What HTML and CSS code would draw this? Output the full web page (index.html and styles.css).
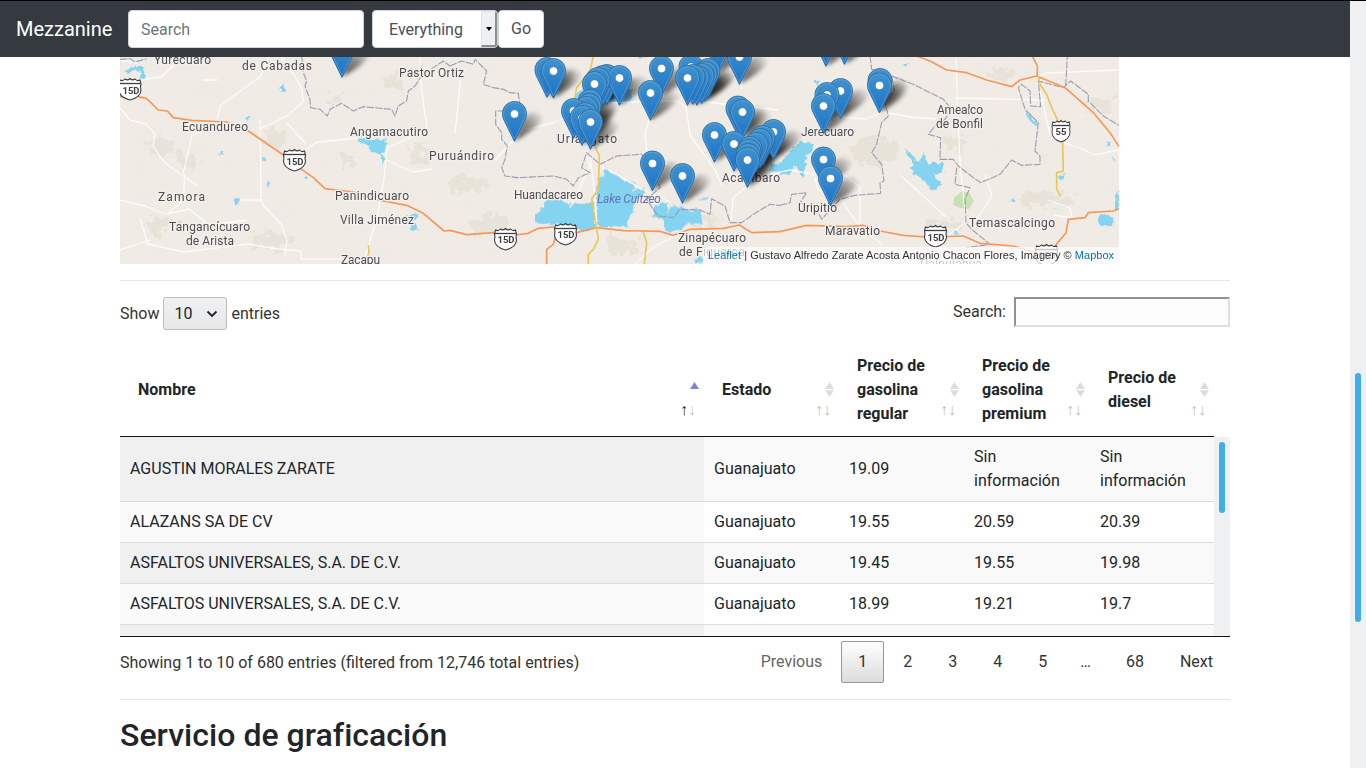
FILE: index.html
```html
<!DOCTYPE html>
<html lang="es">
<head>
<meta charset="utf-8">
<title>Mezzanine</title>
<link rel="stylesheet" href="styles.css">
</head>
<body>
<div class="window">
<div class="page">
<nav class="navbar">
  <a class="brand">Mezzanine</a>
  <input class="nav-input" type="text" placeholder="Search">
  <div class="nav-select"><span>Everything</span><i class="nav-select-btn"></i></div>
  <button class="nav-go">Go</button>
</nav>
<main class="container">
<div class="map">
<svg class="map-svg" viewBox="120 57 999 207" width="999" height="207">
<defs>
  <linearGradient id="pinfill" x1="0" y1="0" x2="0" y2="1"><stop offset="0" stop-color="#3f92cf"/><stop offset="1" stop-color="#1b73c6"/></linearGradient>
  <linearGradient id="pinedge" x1="0" y1="0" x2="0" y2="1"><stop offset="0" stop-color="#2e6c97"/><stop offset="1" stop-color="#2a6ba6"/></linearGradient>
  <linearGradient id="shade" gradientUnits="userSpaceOnUse" x1="2" y1="24" x2="28" y2="2"><stop offset="0" stop-color="#000" stop-opacity=".75"/><stop offset=".5" stop-color="#000" stop-opacity=".5"/><stop offset="1" stop-color="#000" stop-opacity=".05"/></linearGradient>
  <g id="p">
    <path d="M0-12.4C-6.9-12.4-12-7-12-.2C-12 3-10.9 5.6-9.5 8.2L0 27.4L9.5 8.2C10.9 5.6 12 3 12-.2C12-7 6.9-12.4 0-12.4Z" fill="url(#pinfill)" stroke="url(#pinedge)" stroke-width=".9"/>
    <path d="M0-11.3C-6.2-11.3-10.9-6.4-10.9-.2C-10.9 2.8-9.8 5.2-8.5 7.7L0 25L8.5 7.7C9.8 5.2 10.9 2.8 10.9-.2C10.9-6.4 6.2-11.3 0-11.3Z" fill="none" stroke="#8ec1ea" stroke-opacity=".4" stroke-width=".9"/>
    <circle r="4.3" fill="#fff" stroke="#2d70a8" stroke-width=".7"/>
  </g>
  <path id="s" fill="url(#shade)" d="M0 27C4 17 6 5 14 0C22-4 30 0 27 6C22 15 9 22 0 27Z"/>
  <g id="shield"><path d="M-10-9Q-7-7.500-5-10Q-2.500-8 0-10.500Q2.500-8 5-10Q7-7.500 10-9L11-5Q10-2 11 1Q11 8 0 11Q-11 8-11 1Q-10-2-11-5Z" fill="#fff" stroke="#3c3c44" stroke-width="1.1"/><path d="M-10.500-5.500H10.500" stroke="#3c3c44" stroke-width="1.300"/></g>
  <filter id="soft" x="-5%" y="-20%" width="110%" height="140%"><feGaussianBlur stdDeviation="2"/></filter>
  <filter id="terrain" x="0" y="0" width="100%" height="100%"><feTurbulence type="fractalNoise" baseFrequency=".038 .05" numOctaves="4" seed="8"/><feColorMatrix values="0 0 0 0 .85 0 0 0 0 .84 0 0 0 0 .77 7 0 0 0 -4"/></filter>
  <filter id="rough" x="-5%" y="-5%" width="110%" height="110%"><feTurbulence type="fractalNoise" baseFrequency=".12" numOctaves="3" seed="3"/><feDisplacementMap in="SourceGraphic" scale="24" xChannelSelector="R" yChannelSelector="G"/></filter>
  <filter id="shore" x="-5%" y="-5%" width="110%" height="110%"><feTurbulence type="fractalNoise" baseFrequency=".2" numOctaves="2" seed="5"/><feDisplacementMap in="SourceGraphic" scale="6" xChannelSelector="R" yChannelSelector="G"/></filter>
</defs>
<rect x="120" y="57" width="999" height="207" fill="#f0ebe5"/>
<rect x="120" y="57" width="999" height="207" filter="url(#terrain)" opacity=".42"/>
<g fill="#dedacb" opacity=".45" filter="url(#rough)">
  <ellipse cx="162" cy="145" rx="14" ry="9"/><ellipse cx="187" cy="160" rx="11" ry="8"/><ellipse cx="275" cy="138" rx="12" ry="10"/><ellipse cx="159" cy="225" rx="13" ry="9"/><ellipse cx="272" cy="240" rx="22" ry="8"/><ellipse cx="347" cy="160" rx="7" ry="6"/><ellipse cx="420" cy="152" rx="12" ry="9"/><ellipse cx="394" cy="82" rx="10" ry="6"/><ellipse cx="336" cy="98" rx="8" ry="4"/><ellipse cx="468" cy="184" rx="20" ry="8"/><ellipse cx="490" cy="225" rx="20" ry="10"/><ellipse cx="622" cy="244" rx="18" ry="9"/><ellipse cx="875" cy="152" rx="24" ry="14"/><ellipse cx="955" cy="143" rx="12" ry="8"/><ellipse cx="1046" cy="199" rx="28" ry="7"/><ellipse cx="1100" cy="105" rx="14" ry="7"/><ellipse cx="943" cy="225" rx="16" ry="5"/><ellipse cx="700" cy="220" rx="18" ry="6"/><ellipse cx="1000" cy="75" rx="12" ry="5"/>
</g>
<g fill="#bedfab" opacity=".8"><path d="M954 198l8-7 7 2 5 8-5 8-9-1-7-3zM177 223l4-3v5z"/></g>
<g fill="#84d3f1" filter="url(#shore)">
  <g transform="translate(120 56) scale(.33333)"><path d="M712 238L735 240L755 252L797 250V285L785 292L798 308L790 325L782 295L755 290L745 268L715 258ZM15 45L40 32L68 33L76 48L72 68L62 75L64 48L45 42L22 52ZM478 100L488 82L498 98L490 106ZM372 185L384 177L386 195ZM297 296L311 286L308 297ZM430 298L443 308L438 316L428 314ZM550 368L561 355L562 370ZM438 378L450 380L445 395ZM342 432L348 420L360 430L358 442L345 446ZM855 485L880 470L896 480L882 495L890 510L897 526L875 520L865 500Z"/></g>
  <g transform="translate(450 56) scale(.33333)"><path d="M255 480L280 450L290 432L330 432L350 445L430 438L436 512L415 528L390 522L370 510L255 500ZM440 385L448 362L463 358L465 332L478 350L500 355L530 378L557 382L548 405L580 398L590 405L560 430L550 450L550 470L535 490L532 515L500 510L445 512L443 440L438 420ZM610 450L650 440L652 465L670 447L720 462L750 460L762 505L715 500L690 522L660 532L640 515L638 490L620 480L608 490ZM738 435L755 428L780 420L770 430ZM733 605L757 600L760 620L735 624ZM372 130L385 105L550 100L545 135L520 142L470 135L400 142ZM955 345L965 325L990 320L1020 290V358L990 350ZM315 237L328 240L325 245Z"/></g>
  <g transform="translate(780 56) scale(.33333)"><path d="M0 325L20 315L30 290L60 260L102 262L95 285L80 300L75 330L70 370L50 330L30 350L0 355ZM375 270L400 305L420 320L430 290L445 330L460 320L490 325V348L460 355L485 385L465 402L452 400L440 380L425 370L405 360L390 335L402 325L385 300ZM735 168L750 175L772 205L765 208L745 190ZM978 256L992 258L990 272L980 270ZM835 358L858 355L850 365L842 375ZM955 480L975 475L1000 482V510L960 508ZM1017 400V460L1005 465V430ZM520 522L538 530L520 535ZM694 425L704 432L696 440ZM368 28L385 15L382 32ZM98 70L117 75L108 88ZM995 305L1008 308L1000 314Z"/></g>
</g>
<g fill="none" stroke="#fff" stroke-width="1.300" opacity=".8" stroke-linejoin="round">
  <path d="M120 108l10 12 16 4 9 10-2 12 11 16 12 9 22 15M185 174l-2 27-16 13 22-5 20 16 38-5M183 174l9-38 25-16M120 200l25 6 20 8M260 120l1 80 2 5 18 19 6 16-2 16M140 218l8 26 36 8 64-8 30 5 23 2 0 8 60 0M120 250l30-10M217 119l4-14 40-29 8-20M281 57l13 18 8 14 1 13-15 13-17 9-11 5M218 80l-16 0M120 60l17 3M183 57l-22 20-21 3M287 123l18 20"/>
  <path d="M420 57l1 28 6 45-40 18-3 30-7 40-14 46M387 160l25 12 20-3M305 150l12-8 62-6 50-3M458 64l2 20-5 50M240 200l22 0"/>
  <path d="M495 160l28-30 30-7 42-20 82-2 9 6 4 28 25 35 7 16M570 208l20-42-5-12M590 154l5 44 2 40M745 188l-12 10-2 22M650 118l-5 15 2 22 27 12M600 165l40 23 30 14M738 57l4 32M688 100l90 10M743 180l47-10 65 12M635 264l20-18 20-10"/>
  <path d="M815 120l25-3 25 2 18-7 28 5 25 2M956 57l2 60 2 45 6 60-20 15M815 178l3 12 20 5 22 32 23 18M860 227l0-40-25-20M1035 77l12-4 72-3M1040 90l10 45M955 98l90 2M1060 142l20 6 15 7 24-5M1048 200l22 8 2 10-18-3M985 174l7 22-18 28M900 175l30 27 16 15"/>
</g>
<g fill="none" stroke="#9d9dae" stroke-width="3.300" stroke-dasharray="22 4" stroke-linejoin="round">
  <path transform="translate(120 56) scale(.33333)" d="M0 10L30 8L45 18L80 8M545 0L550 50L560 75L555 90L570 130L572 155L600 160L622 180L630 160L665 142L700 165L730 152L815 160L825 180L835 150L860 135L865 105L885 90L905 60L940 35L970 15L990 30"/>
  <path transform="translate(450 56) scale(.33333)" d="M0 30L35 15L70 25L75 10L110 45L100 85L130 95L160 100L180 110L205 112L212 165H137V205L155 230V250L172 270L165 310L155 335L165 360L200 365L310 360L350 370L370 390L385 365L420 350L395 335L410 290L450 325L500 300L575 295L620 370L630 395L590 430L610 460L625 480L670 485L690 460L750 462L780 475L785 428L825 450L840 500L875 500L910 475L960 445L990 448"/>
  <path transform="translate(780 56) scale(.33333)" d="M0 448L30 440L35 415L80 410L60 440L110 460L125 490L180 430L225 418L302 412L300 380L312 375L305 325L275 290L290 265L305 200L325 180L315 140L343 105L335 60L275 40L270 0M335 60L400 85L490 130L515 160L495 190L470 205L445 235L482 245L480 310L520 310L535 330L580 365L602 380L660 355L695 312L725 328L780 325V300L765 285L775 200L735 160L715 95L725 85L750 105L752 150L782 152L775 75L850 95L872 75L925 115V135L970 180L1017 208M857 90L862 0M530 335L525 385L570 395L555 430L558 500L575 520L630 565L560 575"/>
</g>
<g fill="none" stroke="#f4995a" stroke-width="5" stroke-linejoin="round">
  <path transform="translate(120 56) scale(.33333)" d="M0 122L55 122L80 128L115 162L142 165L160 185L215 193L320 198L385 225L490 297L545 340L580 365L615 398L650 402L700 408L740 425L860 448L910 472L972 525L992 523"/>
  <path transform="translate(450 56) scale(.33333)" d="M0 523L50 536L130 530L195 537L235 532L265 517L310 513L380 530L440 515L520 524L630 526L670 538L720 520L820 517L868 507L905 530L992 527M290 624L290 580L310 565L320 530"/>
  <path transform="translate(780 56) scale(.33333)" d="M0 527L80 508L200 512L250 508L300 525L370 538L440 543L550 540L600 562L700 570L800 600L858 530L865 490L915 485L925 470L1000 465L1017 458M410 0L450 15L500 42L560 50L620 72L695 92L720 72L770 60L855 95L940 170L990 230L1017 272M757 0L772 30V60"/>
</g>
<g fill="none" stroke="#eac65b" stroke-width="5" stroke-linejoin="round">
  <path transform="translate(450 56) scale(.33333)" d="M430 0L420 45L380 95L372 140L435 270L448 300L445 400L425 430L440 520L445 550L430 580L415 595V624M580 527L590 560L583 624M609 192L615 175"/>
  <path transform="translate(780 56) scale(.33333)" d="M775 60L780 85L800 115L815 155L832 190L848 260L850 345L830 350L830 400L842 422"/>
  <path transform="translate(120 56) scale(.33333)" d="M745 567L747 590L740 610"/>
</g>
<g class="place">
  <text x="154" y="64" textLength="57">Yurécuaro</text><text x="242" y="70" textLength="70">de Cabadas</text><text x="399" y="77" textLength="65">Pastor Ortiz</text><text x="182" y="131" textLength="66">Ecuandureo</text><text x="350" y="136" textLength="78">Angamacutiro</text><text x="429" y="160" textLength="65">Puruándiro</text><text x="158" y="201" textLength="47">Zamora</text><text x="169" y="231" textLength="81">Tangancícuaro</text><text x="186" y="245" textLength="48">de Arista</text><text x="335" y="200" textLength="74">Panindicuaro</text><text x="340" y="224" textLength="74">Villa Jiménez</text><text x="341" y="264" textLength="39">Zacapu</text><text x="514" y="199" textLength="69">Huandacareo</text><text x="557" y="143" textLength="60">Uriangato</text><text x="678" y="242" textLength="68">Zinapécuaro</text><text x="679" y="256" textLength="66">de Figueroa</text><text x="722" y="182" textLength="58">Acámbaro</text><text x="801" y="136" textLength="53">Jerécuaro</text><text x="937" y="114" textLength="46">Amealco</text><text x="936" y="128" textLength="47">de Bonfil</text><text x="798" y="212" textLength="39">Uripitío</text><text x="825" y="235" textLength="55">Maravatio</text><text x="969" y="227" textLength="86">Temascalcingo</text><text x="918" y="268" textLength="64">Tlalpujahua</text>
  <text class="lake" x="597" y="203" textLength="64">Lake Cuitzeo</text>
</g>
<g class="road-no">
  <use href="#shield" x="130" y="89"/><text x="131" y="94">15D</text><use href="#shield" x="294.500" y="160"/><text x="295" y="165">15D</text><use href="#shield" x="505.500" y="239"/><text x="506" y="243">15D</text><use href="#shield" x="565.500" y="234"/><text x="566" y="238">15D</text><use href="#shield" x="935.500" y="236"/><text x="936" y="241">15D</text><use href="#shield" x="1046.500" y="255"/><text x="1047" y="259">15D</text>
  <g transform="translate(1061 131) scale(.82 1)"><use href="#shield"/></g><text x="1061" y="135">55</text>
</g>
<g id="shadows" filter="url(#soft)" opacity=".85"></g>
<g id="pins"></g>
</svg>
<div class="attribution"><a>Leaflet</a> | Gustavo Alfredo Zarate Acosta Antonio Chacon Flores, Imagery © <a>Mapbox</a></div>
</div>
<hr>
<div class="controls">
  <div class="length">Show <span class="length-select">10<svg width="12" height="8" viewBox="0 0 12 8"><path d="M1.500 1.500L6 6l4.500-4.500" fill="none" stroke="#232629" stroke-width="1.900"/></svg></span> entries</div>
  <label class="filter">Search:<input type="text"></label>
</div>
<div class="thead cols">
  <div class="th asc">Nombre</div><div class="th">Estado</div><div class="th">Precio de gasolina regular</div><div class="th">Precio de gasolina premium</div><div class="th">Precio de diesel</div>
</div>
<div class="scroll">
  <div class="rows">
    <div class="row cols"><div>AGUSTIN MORALES ZARATE</div><div>Guanajuato</div><div>19.09</div><div>Sin información</div><div>Sin información</div></div>
    <div class="row cols"><div>ALAZANS SA DE CV</div><div>Guanajuato</div><div>19.55</div><div>20.59</div><div>20.39</div></div>
    <div class="row cols"><div>ASFALTOS UNIVERSALES, S.A. DE C.V.</div><div>Guanajuato</div><div>19.45</div><div>19.55</div><div>19.98</div></div>
    <div class="row cols"><div>ASFALTOS UNIVERSALES, S.A. DE C.V.</div><div>Guanajuato</div><div>18.99</div><div>19.21</div><div>19.7</div></div>
    <div class="row cols"><div></div><div></div><div></div><div></div><div></div></div>
  </div>
  <div class="track"><div class="thumb"></div></div>
</div>
<div class="footer">
  <div class="info">Showing 1 to 10 of 680 entries (filtered from 12,746 total entries)</div>
  <div class="pages"><a class="disabled">Previous</a><a class="current">1</a><a>2</a><a>3</a><a>4</a><a>5</a><span>…</span><a>68</a><a>Next</a></div>
</div>
<hr>
<h2>Servicio de graficación</h2>
</main>
</div>
<div class="page-track"><div class="page-thumb"></div></div>
</div>
<script src="map.js"></script>
</body>
</html>
```
FILE: styles.css
```css
* { box-sizing: border-box; }
body { margin: 0; font: 16px/24px Roboto, sans-serif; color: #212529; background: #fff; overflow: hidden; }
.window { display: flex; height: 768px; border-top: 1px solid #000; overflow: hidden; }
.page { width: 1350px; }
.navbar { height: 56px; background: #343a40; display: flex; align-items: center; padding: 0 16px; }
.brand { color: #fff; font-size: 20px; line-height: 30px; width: 96px; margin-right: 16px; white-space: nowrap; }
.nav-input { width: 236px; height: 38px; border: 1px solid #ced4da; border-radius: 4px; padding: 6px 12px; font: inherit; margin-right: 8px; }
.nav-input::placeholder { color: #6c757d; opacity: 1; }
.nav-select { width: 126px; height: 38px; background: #fff; border: 1px solid #ced4da; border-radius: 4px; display: flex; align-items: center; justify-content: space-between; padding-left: 16px; color: #495057; overflow: hidden; }
.nav-select span { padding-top: 2px; }
.nav-select-btn { width: 16px; height: 36px; background: #eff0f1; border: 1px solid #e2e3e4; border-right: 2px solid #8c8d8e; border-bottom: 2px solid #8c8d8e; display: flex; align-items: center; justify-content: center; }
.nav-select-btn::after { content: ""; border: 3px solid transparent; border-top: 4px solid #000; border-bottom: 0; }
.nav-go { width: 46px; height: 38px; background: #fff; border: 1px solid #ced4da; border-radius: 4px; padding: 0; font: inherit; color: #495057; }
.container { width: 1110px; margin-left: 120px; }
.map { position: relative; width: 999px; height: 207px; overflow: hidden; }
.map-svg { display: block; }
.place { font: 12px Roboto, sans-serif; fill: #4b4b50; stroke: #f4f0eb; stroke-width: 2.5px; stroke-linejoin: round; paint-order: stroke; }
.lake { font-style: italic; fill: #6275b8; stroke: none; }
.road-no { font: bold 9.5px Roboto, sans-serif; fill: #3c3c44; text-anchor: middle; }
.attribution { position: absolute; right: 0; bottom: 0; padding: 0 5px; height: 17px; font: 11px/17px "Liberation Sans", Arial, sans-serif; word-spacing: .12px; color: #333; background: rgba(255,255,255,.7); white-space: nowrap; }
.attribution a { color: #0078a8; }
hr { margin: 16px 0; border: 0; border-top: 1px solid rgba(0,0,0,.1); }
.controls { display: flex; justify-content: space-between; height: 47px; color: #333; }
.length { display: flex; align-items: center; height: 33px; gap: 4px; }
.length-select { width: 64px; height: 33px; display: flex; align-items: center; justify-content: space-between; padding: 0 8px 0 10px; border: 1px solid #bcbebf; border-radius: 3px; background: linear-gradient(#f1f1f2, #e6e7e9); color: #232629; }
.filter { display: flex; align-items: center; height: 30px; gap: 8px; }
.filter input { width: 216px; height: 30px; border: 2px solid; border-color: #919191 #dfdfdf #dfdfdf #919191; background: #fcfcfc; padding: 1px; }
.cols { display: grid; grid-template-columns: 584px 135px 125px 126px 124px; width: 1094px; }
.thead { height: 93px; border-bottom: 1px solid #111; font-weight: 700; }
.th { position: relative; display: flex; align-items: center; padding: 10px 30px 10px 18px; }
.th::before { content: ""; position: absolute; right: 5px; top: 38px; width: 9px; height: 15px; background: #dcdcdc; clip-path: polygon(50% 0, 100% 47%, 0 47%, 0 55%, 100% 55%, 50% 100%, 0 55%, 0 47%); }
.th.asc::before { height: 7px; background: #8080e0; clip-path: polygon(50% 0, 100% 100%, 0 100%); }
.th::after { content: "↑↓"; position: absolute; right: 8px; bottom: 14px; font: 400 16px/24px "Liberation Sans", sans-serif; color: #c0c1c2; }
.th.asc::after { background: linear-gradient(90deg, #212529 50%, #c0c1c2 50%); background-clip: text; color: transparent; }
.scroll { display: flex; height: 200px; border-bottom: 1px solid #111; overflow: hidden; }
.rows { width: 1094px; }
.row > div { padding: 8px 10px; display: flex; align-items: center; min-height: 40px; }
.row + .row { border-top: 1px solid #ddd; }
.row:nth-child(odd) { background: #f9f9f9; }
.row:nth-child(odd) > :first-child { background: #f0f0f0; }
.row:nth-child(even) > :first-child { background: #fafafa; }
.track { width: 16px; background: #eff0f1; padding: 5px; }
.thumb { width: 6px; height: 71px; border-radius: 3px; background: #3daee9; }
.footer { display: flex; justify-content: space-between; height: 46px; padding-top: 4px; color: #333; }
.info { padding-top: 10px; }
.pages { display: flex; }
.pages a { height: 42px; line-height: 40px; padding: 0 16px; border: 1px solid transparent; border-radius: 2px; margin-left: 2px; }
.pages span { line-height: 42px; padding: 0 16px; }
.pages .disabled { color: #666; }
.pages .current { border-color: #979797; background: linear-gradient(#fff, #dcdcdc); }
h2 { margin: 0; font-size: 32px; line-height: 38.4px; font-weight: 500; letter-spacing: .03px; }
.page-track { width: 16px; background: #eff0f1; padding: 372px 5px 0; }
.page-thumb { width: 6px; height: 249px; border-radius: 3px; background: #3daee9; }
```
FILE: map.js
```js
// Pin positions, given by the centre of each pin's hole.
const stations = [[342,50],[640,30],[826,39],[844.5,37],[718,46],[739.5,57],[691,67],[661.5,68.5],[547,70],[553.5,71],[708,71],[705,74],[607,77],[603,78],[702,76],[697,78],[693,77],[687.5,78],[619.5,78],[598,80],[594.5,84],[880,81],[879.5,85.5],[840.5,91],[650.5,93],[827,95],[590,102],[589,106],[823.5,106],[586,109],[738,108.5],[573.5,111],[742.5,112],[514.5,114],[585,115],[582,118],[590.5,122],[773.5,132],[714.5,135],[763,138],[760,141],[734,144],[756,145],[750,149],[749,152],[748,156],[747.5,160],[823.5,159.5],[652.5,163.5],[682.5,176],[830.5,178.5]];
function place(layer, symbol) {
  for (const [x, y] of stations) {
    const use = document.createElementNS("http://www.w3.org/2000/svg", "use");
    use.setAttribute("href", symbol);
    use.setAttribute("x", x);
    use.setAttribute("y", y);
    document.getElementById(layer).appendChild(use);
  }
}
place("shadows", "#s");
place("pins", "#p");
```
